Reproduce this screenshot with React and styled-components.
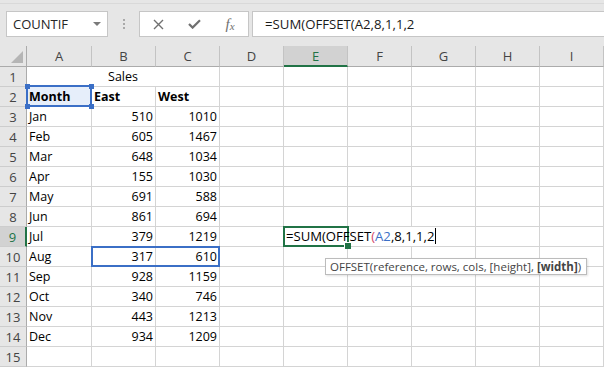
import React from "react";
import styled, { createGlobalStyle } from "styled-components";

const GlobalStyle = createGlobalStyle`
  html, body {
    margin: 0;
    padding: 0;
    background: #ffffff;
    overflow: hidden;
  }
  body {
    font-family: "Open Sans", "Liberation Sans", sans-serif;
    color: #222222;
  }
`;

const UI_FONT = `"Open Sans", "Liberation Sans", sans-serif`;
const GRID = "#d4d4d4";
const GREEN = "#217346";
const BLUE = "#3b6fc6";

const Window = styled.div`
  width: 604px;
  height: 367px;
  overflow: hidden;
  background: #ffffff;
`;

const Toolbar = styled.div`
  height: 46px;
  box-sizing: border-box;
  padding-top: 3px;
  background: #e6e6e6;
`;

const BarRow = styled.div`
  height: 43px;
  box-sizing: border-box;
  display: flex;
  align-items: flex-start;
  padding: 7px 0 0 6px;
  border-top: 1px solid #d9d9d9;
`;

const NameBox = styled.div`
  width: 102px;
  height: 26px;
  box-sizing: border-box;
  display: flex;
  align-items: center;
  justify-content: space-between;
  padding: 0 6px 0 6px;
  background: #ffffff;
  border: 1px solid #c6c6c6;
  font-family: ${UI_FONT};
  font-size: 13px;
  color: #262626;
`;

const Caret = styled.span`
  width: 0;
  height: 0;
  border-left: 4px solid transparent;
  border-right: 4px solid transparent;
  border-top: 4px solid #7a7a7a;
`;

const Grip = styled.div`
  width: 31px;
  height: 26px;
  display: flex;
  flex-direction: column;
  align-items: center;
  justify-content: center;
  gap: 2px;
  span {
    width: 2px;
    height: 2px;
    background: #a9a9a9;
  }
`;

const ActionBox = styled.div`
  width: 110px;
  height: 26px;
  box-sizing: border-box;
  display: flex;
  align-items: center;
  background: #ffffff;
  border: 1px solid #c6c6c6;
`;

const ActionButton = styled.div`
  width: 36px;
  height: 24px;
  display: flex;
  align-items: center;
  justify-content: center;
`;

const Fx = styled.span`
  font-family: "Liberation Serif", serif;
  font-style: italic;
  color: #6f6f6f;
  font-size: 15px;
  line-height: 1;
  sub {
    font-size: 11px;
    vertical-align: baseline;
    position: relative;
    top: 1px;
  }
`;

const FormulaInput = styled.div`
  flex: 1;
  height: 26px;
  margin-left: 3px;
  box-sizing: border-box;
  padding-left: 12px;
  background: #ffffff;
  border: 1px solid #c6c6c6;
  border-right: none;
  font-family: ${UI_FONT};
  font-size: 13.2px;
  line-height: 24px;
  color: #1a1a1a;
  white-space: nowrap;
`;

const Sheet = styled.div`
  display: grid;
  grid-template-columns: 27px 65px repeat(8, 64px);
  grid-template-rows: 21px repeat(15, 20px);
`;

const Corner = styled.div`
  box-sizing: border-box;
  display: flex;
  align-items: flex-end;
  justify-content: flex-end;
  padding: 0 3px 3px 0;
  background: #e6e6e6;
  border-right: 1px solid #ababab;
  border-bottom: 1px solid #ababab;
`;

const ColHead = styled.div`
  box-sizing: border-box;
  background: ${(p) => (p.$active ? "#d2d2d2" : "#e6e6e6")};
  border-right: 1px solid #c3c3c3;
  border-bottom: ${(p) => (p.$active ? `2px solid ${GREEN}` : "1px solid #ababab")};
  font-family: ${UI_FONT};
  font-size: 13px;
  line-height: 21px;
  text-align: center;
  color: ${(p) => (p.$active ? GREEN : "#444444")};
`;

const RowHead = styled.div`
  box-sizing: border-box;
  background: ${(p) => (p.$active ? "#d2d2d2" : "#e6e6e6")};
  border-right: ${(p) => (p.$active ? `2px solid ${GREEN}` : "1px solid #ababab")};
  border-bottom: 1px solid #cdcdcd;
  font-family: ${UI_FONT};
  font-size: 13px;
  line-height: 20px;
  text-align: center;
  color: ${(p) => (p.$active ? GREEN : "#444444")};
`;

const Cell = styled.div`
  box-sizing: border-box;
  position: ${(p) => (p.$anchor ? "relative" : "static")};
  grid-column: span ${(p) => p.$span || 1};
  padding: 0 2px;
  background: ${(p) => p.$fill || "transparent"};
  border-right: 1px solid ${GRID};
  border-bottom: 1px solid ${GRID};
  font-family: ${UI_FONT};
  font-size: 12.5px;
  line-height: 19px;
  font-weight: ${(p) => (p.$bold ? 700 : 400)};
  text-align: ${(p) => p.$align || "left"};
  color: #000000;
  white-space: nowrap;
`;

const Frame = styled.div`
  position: absolute;
  z-index: 3;
  box-sizing: border-box;
  left: ${(p) => p.$x}px;
  top: ${(p) => p.$y}px;
  width: ${(p) => p.$w}px;
  height: ${(p) => p.$h}px;
  border: 2px solid ${(p) => p.$color};
  pointer-events: none;
`;

const Handle = styled.span`
  position: absolute;
  width: ${(p) => p.$size || 5}px;
  height: ${(p) => p.$size || 5}px;
  background: ${(p) => p.$color};
  border-left: ${(p) => (p.$outline ? "1px solid #ffffff" : "none")};
  border-top: ${(p) => (p.$outline ? "1px solid #ffffff" : "none")};
  ${(p) => (p.$top ? "top: -3px;" : "bottom: -4px;")}
  ${(p) => (p.$left ? "left: -3px;" : "right: -4px;")}
`;

/* white strip that hides the gridlines the overflowing entry runs over */
const OverflowMask = styled.div`
  position: absolute;
  z-index: 2;
  left: 63px;
  top: 0;
  width: 127px;
  height: 19px;
  background: #ffffff;
`;

const Editor = styled.div`
  position: absolute;
  z-index: 4;
  left: 0;
  top: 0;
  height: 19px;
  padding-left: 2px;
  font-family: ${UI_FONT};
  font-size: 13.1px;
  line-height: 19px;
  color: #000000;
  white-space: nowrap;
`;

const Ref = styled.span`
  color: ${(p) => p.$color};
`;

const TextCursor = styled.span`
  display: inline-block;
  width: 1px;
  height: 16px;
  margin-left: 1px;
  vertical-align: -3px;
  background: #000000;
`;

const Tooltip = styled.div`
  position: absolute;
  z-index: 5;
  left: 41px;
  top: 31px;
  height: 17px;
  box-sizing: border-box;
  padding: 0 5px 0 4px;
  background: #ffffff;
  border: 1px solid #bcbcbc;
  box-shadow: 1px 1px 2px rgba(0, 0, 0, 0.12);
  font-family: ${UI_FONT};
  font-size: 11.5px;
  line-height: 15px;
  color: #444444;
  white-space: nowrap;
  b {
    font-weight: 700;
  }
`;

const COLUMNS = ["A", "B", "C", "D", "E", "F", "G", "H", "I"];

const SALES = [
  ["Jan", 510, 1010],
  ["Feb", 605, 1467],
  ["Mar", 648, 1034],
  ["Apr", 155, 1030],
  ["May", 691, 588],
  ["Jun", 861, 694],
  ["Jul", 379, 1219],
  ["Aug", 317, 610],
  ["Sep", 928, 1159],
  ["Oct", 340, 746],
  ["Nov", 443, 1213],
  ["Dec", 934, 1209],
];

const Empty = ({ from, row }) =>
  COLUMNS.slice(from).map((c) => <Cell key={`${c}${row}`} />);

const CornerTriangle = () => (
  <svg width="12" height="12" viewBox="0 0 12 12">
    <polygon points="12,0 12,12 0,12" fill="#b5b5b5" />
  </svg>
);

const CancelIcon = () => (
  <svg width="11" height="11" viewBox="0 0 11 11">
    <path d="M1 1 L10 10 M10 1 L1 10" stroke="#707070" strokeWidth="1.4" fill="none" />
  </svg>
);

const EnterIcon = () => (
  <svg width="13" height="10" viewBox="0 0 13 10">
    <path d="M1 5 L4.6 8.6 L12 1.2" stroke="#707070" strokeWidth="2.2" fill="none" />
  </svg>
);

const EditingCell = () => (
  <Cell $anchor>
    <OverflowMask />
    <Frame $x={-1} $y={-1} $w={66} $h={21} $color={GREEN}>
      <Handle $color={GREEN} $size={6} $outline />
    </Frame>
    <Editor>
      =SUM(OFFSET<Ref $color="#d2466a">(</Ref>
      <Ref $color={BLUE}>A2</Ref>,8,1,1,2
      <TextCursor />
    </Editor>
    <Tooltip>
      OFFSET(reference, rows, cols, [height], <b>[width]</b>)
    </Tooltip>
  </Cell>
);

const DataRow = ({ row, month, east, west }) => (
  <>
    <RowHead $active={row === 9}>{row}</RowHead>
    <Cell>{month}</Cell>
    {row === 10 ? (
      <Cell $align="right" $anchor>
        {east}
        <Frame $x={-1} $y={-1} $w={129} $h={21} $color={BLUE} />
      </Cell>
    ) : (
      <Cell $align="right">{east}</Cell>
    )}
    <Cell $align="right">{west}</Cell>
    <Cell />
    {row === 9 ? <EditingCell /> : <Cell />}
    <Empty from={5} row={row} />
  </>
);

export default function App() {
  return (
    <Window>
      <GlobalStyle />
      <Toolbar>
        <BarRow>
          <NameBox>
            COUNTIF
            <Caret />
          </NameBox>
          <Grip>
            <span />
            <span />
            <span />
          </Grip>
          <ActionBox>
            <ActionButton>
              <CancelIcon />
            </ActionButton>
            <ActionButton>
              <EnterIcon />
            </ActionButton>
            <ActionButton>
              <Fx>
                f<sub>x</sub>
              </Fx>
            </ActionButton>
          </ActionBox>
          <FormulaInput>=SUM(OFFSET(A2,8,1,1,2</FormulaInput>
        </BarRow>
      </Toolbar>

      <Sheet>
        <Corner>
          <CornerTriangle />
        </Corner>
        {COLUMNS.map((c) => (
          <ColHead key={c} $active={c === "E"}>
            {c}
          </ColHead>
        ))}

        <RowHead>1</RowHead>
        <Cell $span={3} $align="center">
          Sales
        </Cell>
        <Empty from={3} row={1} />

        <RowHead>2</RowHead>
        <Cell $bold $anchor $fill="#e6eefa">
          Month
          <Frame $x={-1} $y={-2} $w={66} $h={22} $color={BLUE}>
            <Handle $color={BLUE} $top $left />
            <Handle $color={BLUE} $top />
            <Handle $color={BLUE} $left />
            <Handle $color={BLUE} />
          </Frame>
        </Cell>
        <Cell $bold>East</Cell>
        <Cell $bold>West</Cell>
        <Empty from={3} row={2} />

        {SALES.map(([m, e, w], i) => (
          <DataRow key={m} row={i + 3} month={m} east={e} west={w} />
        ))}

        <RowHead>15</RowHead>
        <Empty from={0} row={15} />
      </Sheet>
    </Window>
  );
}
